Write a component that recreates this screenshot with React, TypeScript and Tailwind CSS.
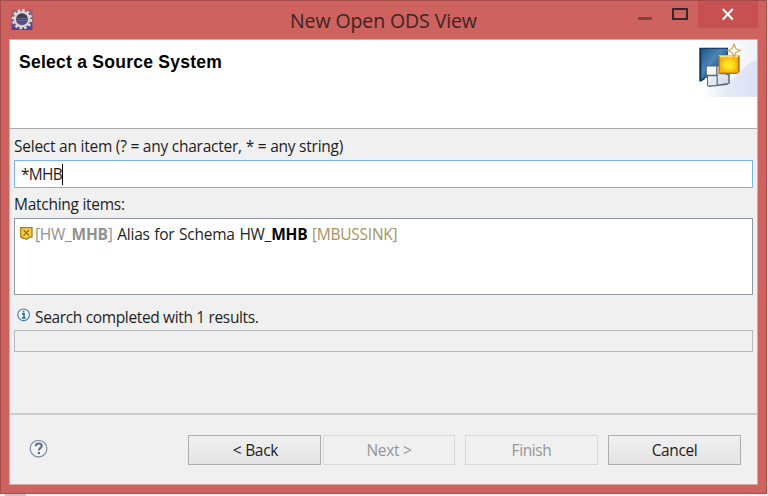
import React from "react";

function GearIcon() {
  return (
    <svg width="22" height="22" viewBox="0 0 22 22">
      <defs>
        <linearGradient id="gearBg" x1="0" y1="0" x2="0" y2="1">
          <stop offset="0" stopColor="#a8606c" />
          <stop offset="0.45" stopColor="#7a5c84" />
          <stop offset="1" stopColor="#573c92" />
        </linearGradient>
        <linearGradient id="gearCore" x1="0" y1="0" x2="0" y2="1">
          <stop offset="0" stopColor="#383346" />
          <stop offset="1" stopColor="#65558f" />
        </linearGradient>
      </defs>
      <rect x="0.5" y="0.5" width="21" height="20.5" fill="url(#gearBg)" />
      <circle cx="11" cy="10.3" r="9" fill="none" stroke="#e6e1de" strokeWidth="2.4" strokeDasharray="2.4 2.312" />
      <circle cx="11" cy="10.3" r="7.2" fill="url(#gearCore)" stroke="#d8d4d3" strokeWidth="2.4" />
      <path d="M6 9.5h10M6 11.5h10" stroke="#77749a" strokeWidth="0.7" />
    </svg>
  );
}

function BannerIcon() {
  return (
    <svg width="61" height="58" viewBox="0 0 61 58">
      <defs>
        <linearGradient id="bannerBg" x1="0" y1="0" x2="1" y2="0">
          <stop offset="0.1" stopColor="#ffffff" />
          <stop offset="0.55" stopColor="#e3e9f7" />
          <stop offset="1" stopColor="#dbe2f5" />
        </linearGradient>
        <linearGradient id="bannerSweep" x1="0" y1="0" x2="1" y2="0">
          <stop offset="0.4" stopColor="#ffffff" />
          <stop offset="1" stopColor="#eef2fb" />
        </linearGradient>
        <linearGradient id="blueSheet" x1="0" y1="0" x2="1" y2="1">
          <stop offset="0" stopColor="#1f568c" />
          <stop offset="0.4" stopColor="#4a85b8" />
          <stop offset="0.75" stopColor="#164577" />
        </linearGradient>
        <radialGradient id="goldCube">
          <stop offset="0" stopColor="#ffee28" />
          <stop offset="0.5" stopColor="#ffdc1c" />
          <stop offset="1" stopColor="#f3b40a" />
        </radialGradient>
        <linearGradient id="cell" x1="0" y1="0" x2="1" y2="1">
          <stop offset="0" stopColor="#ffffff" />
          <stop offset="1" stopColor="#cdd7e4" />
        </linearGradient>
      </defs>
      <rect width="61" height="57" fill="url(#bannerBg)" />
      <path d="M0 0H61V20Q52 22 42 34Q30 47 0 51Z" fill="url(#bannerSweep)" />
      <path d="M3.3 7.7H32V33H12L8.5 39.5L5 41.5H3.3Z" fill="#0e3157" />
      <path d="M5.3 8.7H31.5V30H9.5V36.5L5.3 40Z" fill="url(#blueSheet)" />
      <path d="M9.5 25.3H22V33H33.8V43.3L31 45L13 47L11 45.5V38H9.5Z" fill="#56667a" />
      <path d="M10.8 26.6H20.2V34.8H10.8ZM12 36.2H20.6V45L12 45.6ZM21.8 35H32.3V43L21.8 44.6Z" fill="url(#cell)" />
      <path d="M21.5 26.5H30V34.8H21.5Z" fill="url(#cell)" />
      <path d="M22.5 15.3H43.7V32L41 34H22.5Z" fill="#b4740f" />
      <path d="M23.7 17.2H41.9V32.6H23.7Z" fill="url(#goldCube)" />
      <path d="M22.5 15.3H43.7L41.5 17.6H24.5Z" fill="#ffdd71" />
      <path d="M38 4.3L40 8.7L44.3 10.5L40 12.3L38 16.7L36 12.3L31.7 10.5L36 8.7Z" fill="#fffbe8" stroke="#c69a4c" strokeWidth="1.1" />
    </svg>
  );
}

function ItemIcon() {
  return (
    <svg className="shrink-0" width="13" height="13" viewBox="0 0 13 13">
      <path d="M0.7 0.7H12V10.2H9.5L6.8 12.2L4.5 11.3H2.5V10.2H0.7Z" fill="#f6cf48" stroke="#a87d1c" strokeWidth="1.3" />
      <path d="M3.5 3L9 8.5M9 3L3.5 8.5" stroke="#a46b16" strokeWidth="1.3" />
    </svg>
  );
}

function InfoIcon() {
  return (
    <svg className="shrink-0" width="14" height="14" viewBox="0 0 14 14">
      <circle cx="6.6" cy="6.8" r="5.8" fill="#f8fbfd" stroke="#4080b6" strokeWidth="1.2" />
      <path d="M6.7 2.8V4.4M5 5.8H7V10M4.8 10H8.7" fill="none" stroke="#21649e" strokeWidth="1.5" />
    </svg>
  );
}

function HelpIcon() {
  return (
    <svg width="20" height="20" viewBox="0 0 20 20">
      <circle cx="9.5" cy="9.7" r="8.3" fill="#f4f4f6" stroke="#8490a8" strokeWidth="1.3" />
      <path d="M6.6 7.3C6.6 5.4 7.8 4.5 9.6 4.5S12.7 5.5 12.7 6.9C12.7 8.9 9.9 9 9.9 11.6" fill="none" stroke="#606d8e" strokeWidth="2.1" />
      <path d="M8.7 13H11V15.1H8.7Z" fill="#606d8e" />
    </svg>
  );
}

export default function App() {
  return (
    <div className="h-[496px] w-[768px] overflow-hidden bg-[#f4f0f0] font-['Open_Sans','Noto_Sans',sans-serif] text-[15.5px] text-[#1e1e1e]">
      <div className="flex h-[494px] w-[767px] flex-col border border-[#a74d4b] bg-[#cd625e] px-[8px] pb-[8px]">
        <header className="flex h-[38px] shrink-0">
          <div className="flex w-[281px] pl-[2px] pt-[8px]"><GearIcon /></div>
          <h1 className="flex-1 whitespace-nowrap pt-[6px] text-[19.5px] leading-[27px] tracking-[-0.1px] text-[#3c2524]">New Open ODS View</h1>
          <div className="flex w-[130px]">
            <div className="flex w-[34px] justify-center pt-[16px]"><div className="h-[3px] w-[14px] bg-[#7f4341]" /></div>
            <div className="flex w-[36px] justify-center pt-[7px]"><div className="h-[12px] w-[16px] border-2 border-[#35282a]" /></div>
            <button className="flex h-[27px] w-[60px] justify-center bg-[#c75050] pt-[7px]">
              <svg width="13" height="13" viewBox="0 0 13 13"><path d="M0.8 1L10.8 11.5M10.8 1L0.8 11.5" stroke="#fff" strokeWidth="2" /></svg>
            </button>
          </div>
        </header>
        <main className="flex min-h-0 flex-1 flex-col border border-[#d9a9a5] bg-[#f0f0f0]">
          <section className="flex h-[89px] shrink-0 justify-between border-b border-[#aaaaaa] bg-white">
            <h2 className="whitespace-nowrap pl-[9px] pt-[10px] font-['Liberation_Sans',Arial,sans-serif] text-[17.5px] font-bold leading-[24px] tracking-[0.26px] text-black">Select a Source System</h2>
            <BannerIcon />
          </section>
          <section className="flex flex-col px-1">
            <p className="h-[31px] whitespace-nowrap pt-[6px] leading-[22px] tracking-[-0.24px]">Select an item (? = any character, * = any string)</p>
            <div className="flex h-[28px] items-center border border-[#7eb4ea] bg-white pl-[6px]">
              <span className="pt-[2px] tracking-[-0.7px]">*MHB</span><span className="h-[21px] w-px bg-black" />
            </div>
            <p className="h-[30px] pt-[5px] leading-[22px] tracking-[-0.27px]">Matching items:</p>
            <div className="h-[77px] border border-[#9298a1] bg-white pl-[5px] pt-[3px]">
              <div className="flex h-[22px] items-center whitespace-pre leading-[22px]">
                <ItemIcon />
                <span className="pl-[2px] pt-[1px] tracking-[-0.25px] [word-spacing:0.9px]"><span className="text-[#919191]">[HW_<b>MHB</b>]</span> Alias for Schema HW_<b className="text-black">MHB</b> <span className="text-[#a8925d]">[MBUSSINK]</span></span>
              </div>
            </div>
            <div className="flex h-[35px] pt-[11px] leading-[23px]">
              <div className="pl-[3px] pt-[2px]"><InfoIcon /></div>
              <span className="pl-[4px] tracking-[-0.35px]">Search completed with 1 results.</span>
            </div>
            <div className="h-[22px] border border-[#b8b8b8]" />
          </section>
          <footer className="mt-[61px] flex flex-1 border-t-2 border-[#cccccc]">
            <div className="w-[178px] pl-[19px] pt-[24px]"><HelpIcon /></div>
            <button className="mt-[20px] h-[30px] w-[133px] border border-[#adadad] bg-linear-to-b from-[#f0f0f0] to-[#e4e4e4] pl-[2px] pt-[2px] tracking-[-0.3px]">&lt; Back</button>
            <button className="ml-[2px] mt-[20px] h-[30px] w-[132px] border border-[#dadada] pt-[2px] text-[#969696] tracking-[-0.3px]">Next &gt;</button>
            <button className="ml-[10px] mt-[20px] h-[30px] w-[133px] border border-[#dadada] pt-[2px] text-[#969696] tracking-[-0.4px]">Finish</button>
            <button className="ml-[10px] mt-[20px] h-[30px] w-[133px] border border-[#adadad] bg-linear-to-b from-[#f0f0f0] to-[#e4e4e4] pt-[2px] tracking-[-0.4px]">Cancel</button>
          </footer>
        </main>
      </div>
      <div className="ml-[5px] h-[2px] w-[21px] bg-[#c9c5c5]" />
    </div>
  );
}
